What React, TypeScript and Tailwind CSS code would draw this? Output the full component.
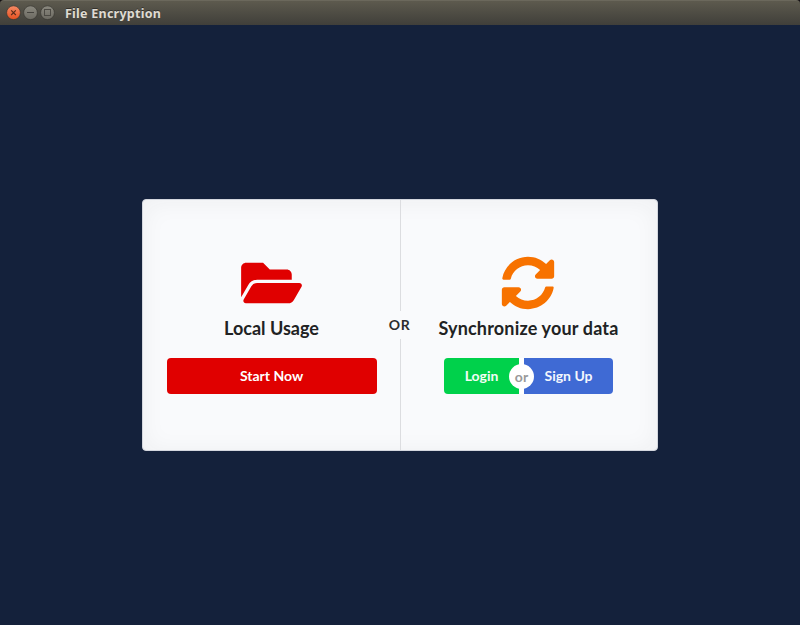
import React from "react";
import { FaFolderOpen, FaSyncAlt } from "react-icons/fa";

function TitleBar() {
  return (
    <div className="bg-[#120f12]">
      <header className="flex h-[25px] items-center rounded-t-[4px] border-t border-[#6b685c] bg-linear-to-b from-[#5d5a4e] to-[#403f3a] pl-[6px]">
        <svg width="50" height="16" viewBox="0 0 50 16" className="shrink-0">
          <defs>
            <linearGradient id="close" x1="0" y1="0" x2="0" y2="1">
              <stop offset="0" stopColor="#f58b66" />
              <stop offset="1" stopColor="#e6501f" />
            </linearGradient>
            <linearGradient id="grey" x1="0" y1="0" x2="0" y2="1">
              <stop offset="0" stopColor="#8b897f" />
              <stop offset="1" stopColor="#6c6a62" />
            </linearGradient>
          </defs>
          <circle cx="7.5" cy="7.7" r="6.9" fill="url(#close)" stroke="#383630" strokeWidth="0.7" />
          <path d="M5.2 5.4l4.6 4.6M9.8 5.4l-4.6 4.6" stroke="#5a2c1a" strokeWidth="1.1" />
          <circle cx="24.5" cy="7.7" r="6.9" fill="url(#grey)" stroke="#383630" strokeWidth="0.7" />
          <path d="M21 7.5h7" stroke="#45433e" strokeWidth="1" />
          <circle cx="41.5" cy="7.7" r="6.9" fill="url(#grey)" stroke="#383630" strokeWidth="0.7" />
          <rect x="38.5" y="4.5" width="6" height="6" fill="none" stroke="#4c4a44" strokeWidth="1" />
        </svg>
        <h1 className="mt-[2px] ml-[9px] font-['Noto_Sans',sans-serif] text-[12.5px] leading-4 font-bold tracking-[0.25px] whitespace-nowrap text-[#dfdbd2] [text-shadow:0_-1px_0_#33312c]">
          File Encryption
        </h1>
      </header>
    </div>
  );
}

export default function App() {
  return (
    <div className="flex h-[625px] w-[800px] flex-col overflow-hidden bg-[#14213b] font-['Lato',sans-serif] text-[14px]">
      <TitleBar />
      <main className="flex flex-1 items-center justify-center">
        <section className="relative grid h-[252px] w-[516px] grid-cols-2 rounded-[4px] border border-[#d4d7de] bg-[#f9fafc] shadow-[inset_0_2px_25px_0_rgba(34,36,38,0.05)]">
          <div className="flex flex-col items-center pt-[56px]">
            <FaFolderOpen className="h-[54px] w-[61px] text-[#e00000]" />
            <h2 className="mt-[7px] text-[18px] leading-[23px] font-bold text-[#212223]">Local Usage</h2>
            <button className="mt-[18px] h-9 w-[210px] rounded-[4px] bg-[#e00000] leading-[14px] font-bold text-white">
              Start Now
            </button>
          </div>
          <div className="flex flex-col items-center pt-[56px]">
            <FaSyncAlt className="mr-[2px] size-[54px] text-[#f77200]" />
            <h2 className="mt-[7px] text-[18px] leading-[23px] font-bold tracking-[0.17px] whitespace-nowrap text-[#212223]">
              Synchronize your data
            </h2>
            <div className="relative mt-[18px] flex">
              <button className="h-9 w-[75px] rounded-l-[4px] bg-[#00d14b] leading-[14px] font-bold text-[#f3fdf6]">
                Login
              </button>
              <div className="w-[5px] bg-white" />
              <button className="h-9 w-[89px] rounded-r-[4px] bg-[#3f6ad4] leading-[14px] font-bold text-[#f4f7fd]">
                Sign Up
              </button>
              <span className="absolute top-[6px] left-[65px] flex size-[25px] items-center justify-center rounded-full bg-white pt-px leading-[14px] font-bold text-[#999]">
                or
              </span>
            </div>
          </div>
          <div className="absolute inset-y-0 left-[257px] flex w-px flex-col items-center">
            <div className="w-px flex-1 bg-[#dcdde0]" />
            <span className="flex h-7 items-center pr-[2px] pb-[2px] font-bold tracking-[0.7px] text-[#2c2d2e]">OR</span>
            <div className="w-px flex-1 bg-[#dcdde0]" />
          </div>
        </section>
      </main>
    </div>
  );
}
